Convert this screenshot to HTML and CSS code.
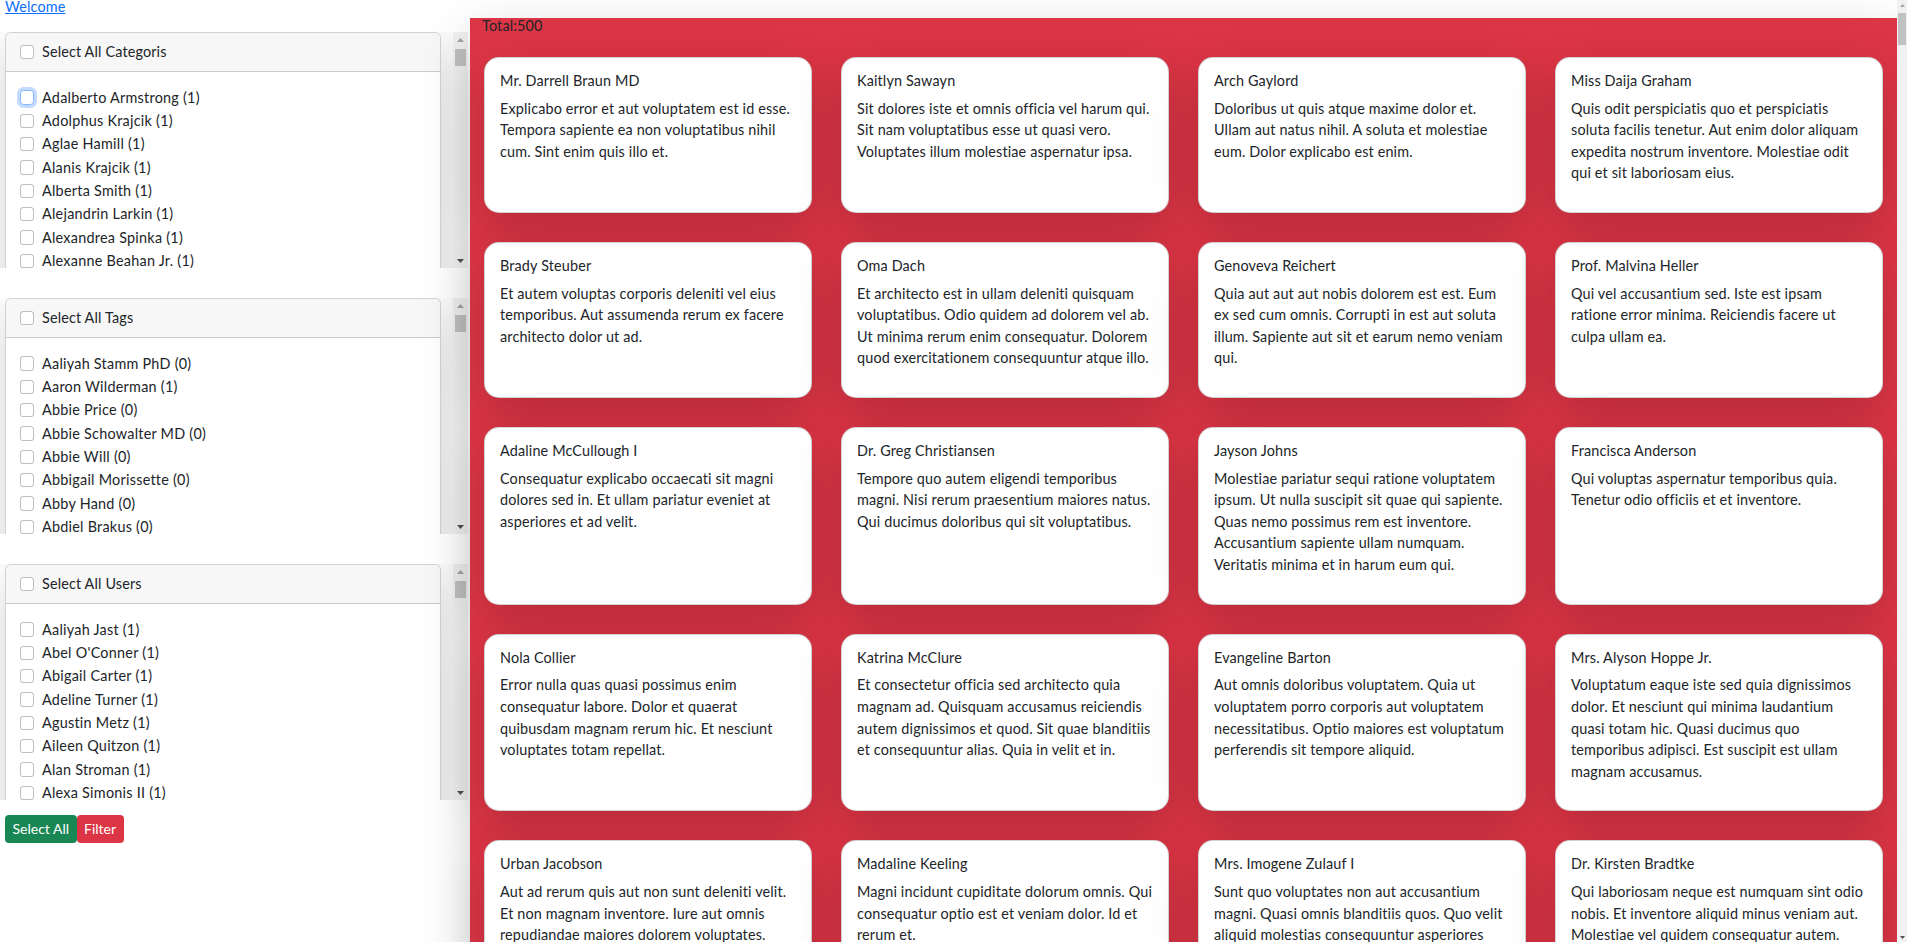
FILE: index.html
```html
<!DOCTYPE html>
<html lang="en">
<head>
<meta charset="utf-8">
<title>Posts</title>
<link rel="stylesheet" href="styles.css">
</head>
<body>
<div class="page">
<div class="topbar"><a href="#">Welcome</a></div>
<div class="layout">
  <aside class="sidebar">
    <div class="filter-scroll">
      <div class="filter-viewport">
        <div class="filter-card">
          <div class="filter-head"><input type="checkbox"><span>Select All Categoris</span></div>
          <div class="filter-body">
            <label class="item"><input type="checkbox" class="focus">Adalberto Armstrong (1)</label>
            <label class="item"><input type="checkbox">Adolphus Krajcik (1)</label>
            <label class="item"><input type="checkbox">Aglae Hamill (1)</label>
            <label class="item"><input type="checkbox">Alanis Krajcik (1)</label>
            <label class="item"><input type="checkbox">Alberta Smith (1)</label>
            <label class="item"><input type="checkbox">Alejandrin Larkin (1)</label>
            <label class="item"><input type="checkbox">Alexandrea Spinka (1)</label>
            <label class="item"><input type="checkbox">Alexanne Beahan Jr. (1)</label>
            <label class="item"><input type="checkbox">Alfonzo Heller (1)</label>
            <label class="item"><input type="checkbox">Alford Kuhlman (1)</label>
            <label class="item"><input type="checkbox">Alice Bogisich (1)</label>
            <label class="item"><input type="checkbox">Alize Grady (1)</label>
            <label class="item"><input type="checkbox">Allan Nitzsche (1)</label>
            <label class="item"><input type="checkbox">Alva Kub (1)</label>
            <label class="item"><input type="checkbox">Amalia Reinger (1)</label>
            <label class="item"><input type="checkbox">Amani Stokes (1)</label>
            <label class="item"><input type="checkbox">Amara Wehner (1)</label>
            <label class="item"><input type="checkbox">Ambrose Jacobi (1)</label>
            <label class="item"><input type="checkbox">Amely Schaden (1)</label>
            <label class="item"><input type="checkbox">Amie Hintz (1)</label>
            <label class="item"><input type="checkbox">Amir Lueilwitz (1)</label>
            <label class="item"><input type="checkbox">Ana Bosco (1)</label>
            <label class="item"><input type="checkbox">Anabelle Kris (1)</label>
            <label class="item"><input type="checkbox">Anastacio Haag (1)</label>
            <label class="item"><input type="checkbox">Andre Rempel (1)</label>
            <label class="item"><input type="checkbox">Angelica Yost (1)</label>
            <label class="item"><input type="checkbox">Angus Veum (1)</label>
            <label class="item"><input type="checkbox">Anika Marvin (1)</label>
            <label class="item"><input type="checkbox">Annette Dibbert (1)</label>
            <label class="item"><input type="checkbox">Antwon Toy (1)</label>
            <label class="item"><input type="checkbox">Arely Kovacek (1)</label>
            <label class="item"><input type="checkbox">Ariane Wolf (1)</label>
            <label class="item"><input type="checkbox">Arnaldo Boehm (1)</label>
            <label class="item"><input type="checkbox">Arvid Labadie (1)</label>
            <label class="item"><input type="checkbox">Ashlee Cronin (1)</label>
            <label class="item"><input type="checkbox">Aubree Sauer (1)</label>
            <label class="item"><input type="checkbox">Audie Tromp (1)</label>
            <label class="item"><input type="checkbox">Augustus Ebert (1)</label>
            <label class="item"><input type="checkbox">Aurelia Lowe (1)</label>
            <label class="item"><input type="checkbox">Austen Fadel (1)</label>
            <label class="item"><input type="checkbox">Ayana Dach (1)</label>
            <label class="item"><input type="checkbox">Baron Hettinger (1)</label>
            <label class="item"><input type="checkbox">Barrett Mante (1)</label>
            <label class="item"><input type="checkbox">Beatrice Koss (1)</label>
            <label class="item"><input type="checkbox">Belle Goyette (1)</label>
          </div>
        </div>
      </div>
      <div class="vscroll">
        <span class="sb-btn up"><svg width="7" height="4" viewBox="0 0 7 4"><path d="M0 4L3.5 0 7 4z"/></svg></span>
        <span class="sb-track"><span class="sb-thumb"></span></span>
        <span class="sb-btn down"><svg width="7" height="4" viewBox="0 0 7 4"><path d="M0 0H7L3.5 4z"/></svg></span>
      </div>
    </div>

    <div class="filter-scroll">
      <div class="filter-viewport">
        <div class="filter-card">
          <div class="filter-head"><input type="checkbox"><span>Select All Tags</span></div>
          <div class="filter-body">
            <label class="item"><input type="checkbox">Aaliyah Stamm PhD (0)</label>
            <label class="item"><input type="checkbox">Aaron Wilderman (1)</label>
            <label class="item"><input type="checkbox">Abbie Price (0)</label>
            <label class="item"><input type="checkbox">Abbie Schowalter MD (0)</label>
            <label class="item"><input type="checkbox">Abbie Will (0)</label>
            <label class="item"><input type="checkbox">Abbigail Morissette (0)</label>
            <label class="item"><input type="checkbox">Abby Hand (0)</label>
            <label class="item"><input type="checkbox">Abdiel Brakus (0)</label>
            <label class="item"><input type="checkbox">Abdul Gleason (0)</label>
            <label class="item"><input type="checkbox">Abe Mraz (1)</label>
            <label class="item"><input type="checkbox">Abel Hodkiewicz (0)</label>
            <label class="item"><input type="checkbox">Abelardo Rolfson (0)</label>
            <label class="item"><input type="checkbox">Abigale Runte (0)</label>
            <label class="item"><input type="checkbox">Abner Bins (0)</label>
            <label class="item"><input type="checkbox">Ada Considine (0)</label>
            <label class="item"><input type="checkbox">Adah Feest (1)</label>
            <label class="item"><input type="checkbox">Adan Lang (0)</label>
            <label class="item"><input type="checkbox">Addie Hills (0)</label>
            <label class="item"><input type="checkbox">Addison Moore (0)</label>
            <label class="item"><input type="checkbox">Adela Ondricka (0)</label>
            <label class="item"><input type="checkbox">Adelbert Zemlak (0)</label>
            <label class="item"><input type="checkbox">Adell Kautzer (0)</label>
            <label class="item"><input type="checkbox">Adella Corwin (0)</label>
            <label class="item"><input type="checkbox">Adolf Wyman (1)</label>
            <label class="item"><input type="checkbox">Adonis Howe (0)</label>
            <label class="item"><input type="checkbox">Adrain Cole (0)</label>
            <label class="item"><input type="checkbox">Adrian Beer (0)</label>
            <label class="item"><input type="checkbox">Adriana Fay (0)</label>
            <label class="item"><input type="checkbox">Adrien Mohr (0)</label>
            <label class="item"><input type="checkbox">Agnes Durgan (1)</label>
            <label class="item"><input type="checkbox">Aida Bailey (0)</label>
            <label class="item"><input type="checkbox">Aimee Larson (0)</label>
            <label class="item"><input type="checkbox">Akeem Pollich (0)</label>
            <label class="item"><input type="checkbox">Alaina Torp (0)</label>
            <label class="item"><input type="checkbox">Albert Zboncak (0)</label>
            <label class="item"><input type="checkbox">Alda Gibson (1)</label>
            <label class="item"><input type="checkbox">Alec Willms (0)</label>
            <label class="item"><input type="checkbox">Alena Purdy (0)</label>
            <label class="item"><input type="checkbox">Alessandra Block (0)</label>
            <label class="item"><input type="checkbox">Alex Terry (0)</label>
            <label class="item"><input type="checkbox">Alfred Crist (0)</label>
            <label class="item"><input type="checkbox">Ali Okuneva (0)</label>
            <label class="item"><input type="checkbox">Alisa Hyatt (0)</label>
          </div>
        </div>
      </div>
      <div class="vscroll">
        <span class="sb-btn up"><svg width="7" height="4" viewBox="0 0 7 4"><path d="M0 4L3.5 0 7 4z"/></svg></span>
        <span class="sb-track"><span class="sb-thumb"></span></span>
        <span class="sb-btn down"><svg width="7" height="4" viewBox="0 0 7 4"><path d="M0 0H7L3.5 4z"/></svg></span>
      </div>
    </div>

    <div class="filter-scroll last">
      <div class="filter-viewport">
        <div class="filter-card">
          <div class="filter-head"><input type="checkbox"><span>Select All Users</span></div>
          <div class="filter-body">
            <label class="item"><input type="checkbox">Aaliyah Jast (1)</label>
            <label class="item"><input type="checkbox">Abel O'Conner (1)</label>
            <label class="item"><input type="checkbox">Abigail Carter (1)</label>
            <label class="item"><input type="checkbox">Adeline Turner (1)</label>
            <label class="item"><input type="checkbox">Agustin Metz (1)</label>
            <label class="item"><input type="checkbox">Aileen Quitzon (1)</label>
            <label class="item"><input type="checkbox">Alan Stroman (1)</label>
            <label class="item"><input type="checkbox">Alexa Simonis II (1)</label>
            <label class="item"><input type="checkbox">Alexander Kiehn (1)</label>
            <label class="item"><input type="checkbox">Alia Dooley (1)</label>
            <label class="item"><input type="checkbox">Alivia Gerlach (1)</label>
            <label class="item"><input type="checkbox">Allie Rath (1)</label>
            <label class="item"><input type="checkbox">Alta Frami (1)</label>
            <label class="item"><input type="checkbox">Alvena Rowe (1)</label>
            <label class="item"><input type="checkbox">Alyce Mayert (1)</label>
            <label class="item"><input type="checkbox">Amalia Hudson (1)</label>
            <label class="item"><input type="checkbox">Amber Greenholt (1)</label>
            <label class="item"><input type="checkbox">Americo Wiza (1)</label>
            <label class="item"><input type="checkbox">Amos Sporer (1)</label>
            <label class="item"><input type="checkbox">Anahi Bednar (1)</label>
            <label class="item"><input type="checkbox">Andy Mills (1)</label>
            <label class="item"><input type="checkbox">Angel Schuster (1)</label>
            <label class="item"><input type="checkbox">Anita Bashirian (1)</label>
            <label class="item"><input type="checkbox">Ansel Ferry (1)</label>
            <label class="item"><input type="checkbox">Araceli Pfeffer (1)</label>
            <label class="item"><input type="checkbox">Ardella Hane (1)</label>
            <label class="item"><input type="checkbox">Ari Walsh (1)</label>
            <label class="item"><input type="checkbox">Arlo Senger (1)</label>
            <label class="item"><input type="checkbox">Arnold Kemmer (1)</label>
            <label class="item"><input type="checkbox">Arvilla Roob (1)</label>
            <label class="item"><input type="checkbox">Asa Pagac (1)</label>
            <label class="item"><input type="checkbox">Ashton Ledner (1)</label>
            <label class="item"><input type="checkbox">Audra Monahan (1)</label>
            <label class="item"><input type="checkbox">Augusta Heidenreich (1)</label>
            <label class="item"><input type="checkbox">Avery Lind (1)</label>
            <label class="item"><input type="checkbox">Axel Kunze (1)</label>
            <label class="item"><input type="checkbox">Barbara Cassin (1)</label>
            <label class="item"><input type="checkbox">Barney Olson (1)</label>
            <label class="item"><input type="checkbox">Beau Harvey (1)</label>
            <label class="item"><input type="checkbox">Benny Ward (1)</label>
            <label class="item"><input type="checkbox">Bernie Johns (1)</label>
            <label class="item"><input type="checkbox">Bertha Keebler (1)</label>
            <label class="item"><input type="checkbox">Blaze Huels (1)</label>
          </div>
        </div>
      </div>
      <div class="vscroll">
        <span class="sb-btn up"><svg width="7" height="4" viewBox="0 0 7 4"><path d="M0 4L3.5 0 7 4z"/></svg></span>
        <span class="sb-track"><span class="sb-thumb"></span></span>
        <span class="sb-btn down"><svg width="7" height="4" viewBox="0 0 7 4"><path d="M0 0H7L3.5 4z"/></svg></span>
      </div>
    </div>

    <div class="actions"><button class="btn btn-success">Select All</button><button class="btn btn-danger">Filter</button></div>
  </aside>

  <main class="content">
    <div class="total">Total:500</div>
    <div class="cards">
      <div class="card"><h5 class="card-title">Mr. Darrell Braun MD</h5><p class="card-text">Explicabo error et aut voluptatem est id esse. Tempora sapiente ea non voluptatibus nihil cum. Sint enim quis illo et.</p></div>
      <div class="card"><h5 class="card-title">Kaitlyn Sawayn</h5><p class="card-text">Sit dolores iste et omnis officia vel harum qui. Sit nam voluptatibus esse ut quasi vero. Voluptates illum molestiae aspernatur ipsa.</p></div>
      <div class="card"><h5 class="card-title">Arch Gaylord</h5><p class="card-text">Doloribus ut quis atque maxime dolor et. Ullam aut natus nihil. A soluta et molestiae eum. Dolor explicabo est enim.</p></div>
      <div class="card"><h5 class="card-title">Miss Daija Graham</h5><p class="card-text">Quis odit perspiciatis quo et perspiciatis soluta facilis tenetur. Aut enim dolor aliquam expedita nostrum inventore. Molestiae odit qui et sit laboriosam eius.</p></div>

      <div class="card"><h5 class="card-title">Brady Steuber</h5><p class="card-text">Et autem voluptas corporis deleniti vel eius temporibus. Aut assumenda rerum ex facere architecto dolor ut ad.</p></div>
      <div class="card"><h5 class="card-title">Oma Dach</h5><p class="card-text">Et architecto est in ullam deleniti quisquam voluptatibus. Odio quidem ad dolorem vel ab. Ut minima rerum enim consequatur. Dolorem quod exercitationem consequuntur atque illo.</p></div>
      <div class="card"><h5 class="card-title">Genoveva Reichert</h5><p class="card-text">Quia aut aut aut nobis dolorem est est. Eum ex sed cum omnis. Corrupti in est aut soluta illum. Sapiente aut sit et earum nemo veniam qui.</p></div>
      <div class="card"><h5 class="card-title">Prof. Malvina Heller</h5><p class="card-text">Qui vel accusantium sed. Iste est ipsam ratione error minima. Reiciendis facere ut culpa ullam ea.</p></div>

      <div class="card"><h5 class="card-title">Adaline McCullough I</h5><p class="card-text">Consequatur explicabo occaecati sit magni dolores sed in. Et ullam pariatur eveniet at asperiores et ad velit.</p></div>
      <div class="card"><h5 class="card-title">Dr. Greg Christiansen</h5><p class="card-text">Tempore quo autem eligendi temporibus magni. Nisi rerum praesentium maiores natus. Qui ducimus doloribus qui sit voluptatibus.</p></div>
      <div class="card"><h5 class="card-title">Jayson Johns</h5><p class="card-text">Molestiae pariatur sequi ratione voluptatem ipsum. Ut nulla suscipit sit quae qui sapiente. Quas nemo possimus rem est inventore. Accusantium sapiente ullam numquam. Veritatis minima et in harum eum qui.</p></div>
      <div class="card"><h5 class="card-title">Francisca Anderson</h5><p class="card-text">Qui voluptas aspernatur temporibus quia. Tenetur odio officiis et et inventore.</p></div>

      <div class="card"><h5 class="card-title">Nola Collier</h5><p class="card-text">Error nulla quas quasi possimus enim consequatur labore. Dolor et quaerat quibusdam magnam rerum hic. Et nesciunt voluptates totam repellat.</p></div>
      <div class="card"><h5 class="card-title">Katrina McClure</h5><p class="card-text">Et consectetur officia sed architecto quia magnam ad. Quisquam accusamus reiciendis autem dignissimos et quod. Sit quae blanditiis et consequuntur alias. Quia in velit et in.</p></div>
      <div class="card"><h5 class="card-title">Evangeline Barton</h5><p class="card-text">Aut omnis doloribus voluptatem. Quia ut voluptatem porro corporis aut voluptatem necessitatibus. Optio maiores est voluptatum perferendis sit tempore aliquid.</p></div>
      <div class="card"><h5 class="card-title">Mrs. Alyson Hoppe Jr.</h5><p class="card-text">Voluptatum eaque iste sed quia dignissimos dolor. Et nesciunt qui minima laudantium quasi totam hic. Quasi ducimus quo temporibus adipisci. Est suscipit est ullam magnam accusamus.</p></div>

      <div class="card"><h5 class="card-title">Urban Jacobson</h5><p class="card-text">Aut ad rerum quis aut non sunt deleniti velit. Et non magnam inventore. Iure aut omnis repudiandae maiores dolorem voluptates.</p></div>
      <div class="card"><h5 class="card-title">Madaline Keeling</h5><p class="card-text">Magni incidunt cupiditate dolorum omnis. Qui consequatur optio est et veniam dolor. Id et rerum et.</p></div>
      <div class="card"><h5 class="card-title">Mrs. Imogene Zulauf I</h5><p class="card-text">Sunt quo voluptates non aut accusantium magni. Quasi omnis blanditiis quos. Quo velit aliquid molestias consequuntur asperiores aut.</p></div>
      <div class="card"><h5 class="card-title">Dr. Kirsten Bradtke</h5><p class="card-text">Qui laboriosam neque est numquam sint odio nobis. Et inventore aliquid minus veniam aut. Molestiae vel quidem consequatur autem.</p></div>

      <div class="card"><h5 class="card-title">Lonnie Marquardt</h5><p class="card-text">Et dolorem aut ut non. Sed quia aut vel minus. Recusandae provident et ut.</p></div>
      <div class="card"><h5 class="card-title">Tressa Hagenes</h5><p class="card-text">Voluptas dicta in omnis quis. Dolores et ut ipsum sit. Aut officiis unde labore.</p></div>
      <div class="card"><h5 class="card-title">Prof. Jarrod Gusikowski</h5><p class="card-text">Quo aut ipsa porro sequi. Eos possimus nihil fugiat est aut. Atque rem sed quia.</p></div>
      <div class="card"><h5 class="card-title">Dr. Cleo Kessler</h5><p class="card-text">Nam est eum dolorem voluptas. Ab quas repellendus ut nam ut. Omnis nobis id est.</p></div>
    </div>
  </main>
</div>
</div>
<div class="page-scroll">
  <span class="psb-btn up"><svg width="5" height="3" viewBox="0 0 5 3"><path d="M0 3L2.5 0 5 3z"/></svg></span>
  <span class="psb-track"><span class="psb-thumb"></span></span>
  <span class="psb-btn down"><svg width="5" height="3" viewBox="0 0 5 3"><path d="M0 0H5L2.5 3z"/></svg></span>
</div>
</body>
</html>
```
FILE: styles.css
```css
* { box-sizing: border-box; }
html, body { margin: 0; }
body {
  font-family: "Lato", "Noto Sans", sans-serif;
  font-size: 14.4px;
  line-height: 1.5;
  letter-spacing: 0.15px;
  color: #212529;
  background: #fff;
}
.page { margin-right: 10px; }

.topbar { height: 18px; padding-left: 5px; line-height: 14px; }
.topbar a { color: #0d6efd; text-decoration: underline; }

.layout { display: flex; align-items: flex-start; }

/* ---------- sidebar ---------- */
.sidebar { width: 470px; flex: none; padding-top: 14px; }
.filter-scroll {
  display: flex;
  width: 468px;
  height: 236px;
  margin-bottom: 30px;
}
.filter-scroll.last { margin-bottom: 15px; }
.filter-viewport {
  flex: 1;
  min-width: 0;
  overflow-x: hidden;
  overflow-y: auto;
  scrollbar-width: none;
  padding: 0 12px 0 5px;
}
.vscroll {
  width: 15px;
  flex: none;
  display: flex;
  flex-direction: column;
  background: #f1f1f1;
}
.sb-btn { height: 15px; flex: none; display: flex; align-items: center; justify-content: center; }
.sb-btn svg { display: block; }
.sb-btn.up svg { fill: #a3a3a3; }
.sb-btn.down svg { fill: #505050; }
.sb-track { flex: 1; padding: 2px 2px 0; }
.sb-thumb { display: block; height: 17px; background: #c1c1c1; }

.filter-card {
  background: #fff;
  border: 1px solid rgba(0, 0, 0, .175);
  border-radius: 6px;
  box-shadow: 0 1rem 3rem rgba(0, 0, 0, .175);
}
.filter-head {
  height: 39px;
  display: flex;
  align-items: center;
  gap: 7.6px;
  padding: 0 14px;
  background: #f7f7f7;
  border-bottom: 1px solid rgba(0, 0, 0, .175);
  border-radius: 5px 5px 0 0;
}
.filter-body { padding: 14px 14px; }
.item { display: flex; align-items: center; gap: 7.6px; height: 23.3px; white-space: nowrap; letter-spacing: 0.25px; }

.filter-card input[type="checkbox"] {
  appearance: none;
  -webkit-appearance: none;
  width: 14.4px;
  height: 14.4px;
  margin: 0;
  flex: none;
  border: 1px solid rgba(0, 0, 0, .25);
  border-radius: 3.6px;
  background: #fff;
}
.filter-card input.focus {
  border-color: #86b7fe;
  box-shadow: 0 0 0 3px rgba(13, 110, 253, .25);
}

.actions { padding-left: 5px; display: flex; }
.btn {
  font-family: inherit;
  font-size: 14px;
  letter-spacing: 0;
  line-height: 20px;
  padding: 4px 7.5px;
  border: none;
  border-radius: 4px;
  color: #fff;
}
.btn-success { background: #198754; }
.btn-danger { background: #dc3545; }

/* ---------- content ---------- */
.content {
  flex: 1;
  min-width: 0;
  background: #dc3545;
  box-shadow: 0 1rem 3rem rgba(0, 0, 0, .175);
}
.total { line-height: 16px; padding-left: 12px; }
.cards {
  display: grid;
  grid-template-columns: repeat(4, 1fr);
  gap: 29px;
  padding: 23px 14px 29px;
}
.card {
  background: #fff;
  border: 1px solid rgba(0, 0, 0, .175);
  border-radius: 15px;
  padding: 12px 15px;
  box-shadow: 0 1rem 3rem rgba(0, 0, 0, .175);
}
.card-title {
  margin: 0 0 6px;
  font-size: 14.4px;
  font-weight: 400;
  line-height: 21.6px;
}
.card-text { margin: 0 0 16px; }

/* ---------- page scrollbar ---------- */
.page-scroll {
  position: fixed;
  top: 0;
  right: 0;
  bottom: 0;
  width: 10px;
  display: flex;
  flex-direction: column;
  background: #f1f1f1;
}
.psb-btn { height: 10px; flex: none; display: flex; align-items: center; justify-content: center; }
.psb-btn svg { display: block; fill: #505050; }
.psb-btn.up svg { fill: #a3a3a3; }
.psb-track { flex: 1; padding: 3px 1px 0; }
.psb-thumb { display: block; height: 32px; background: #c1c1c1; }
```
